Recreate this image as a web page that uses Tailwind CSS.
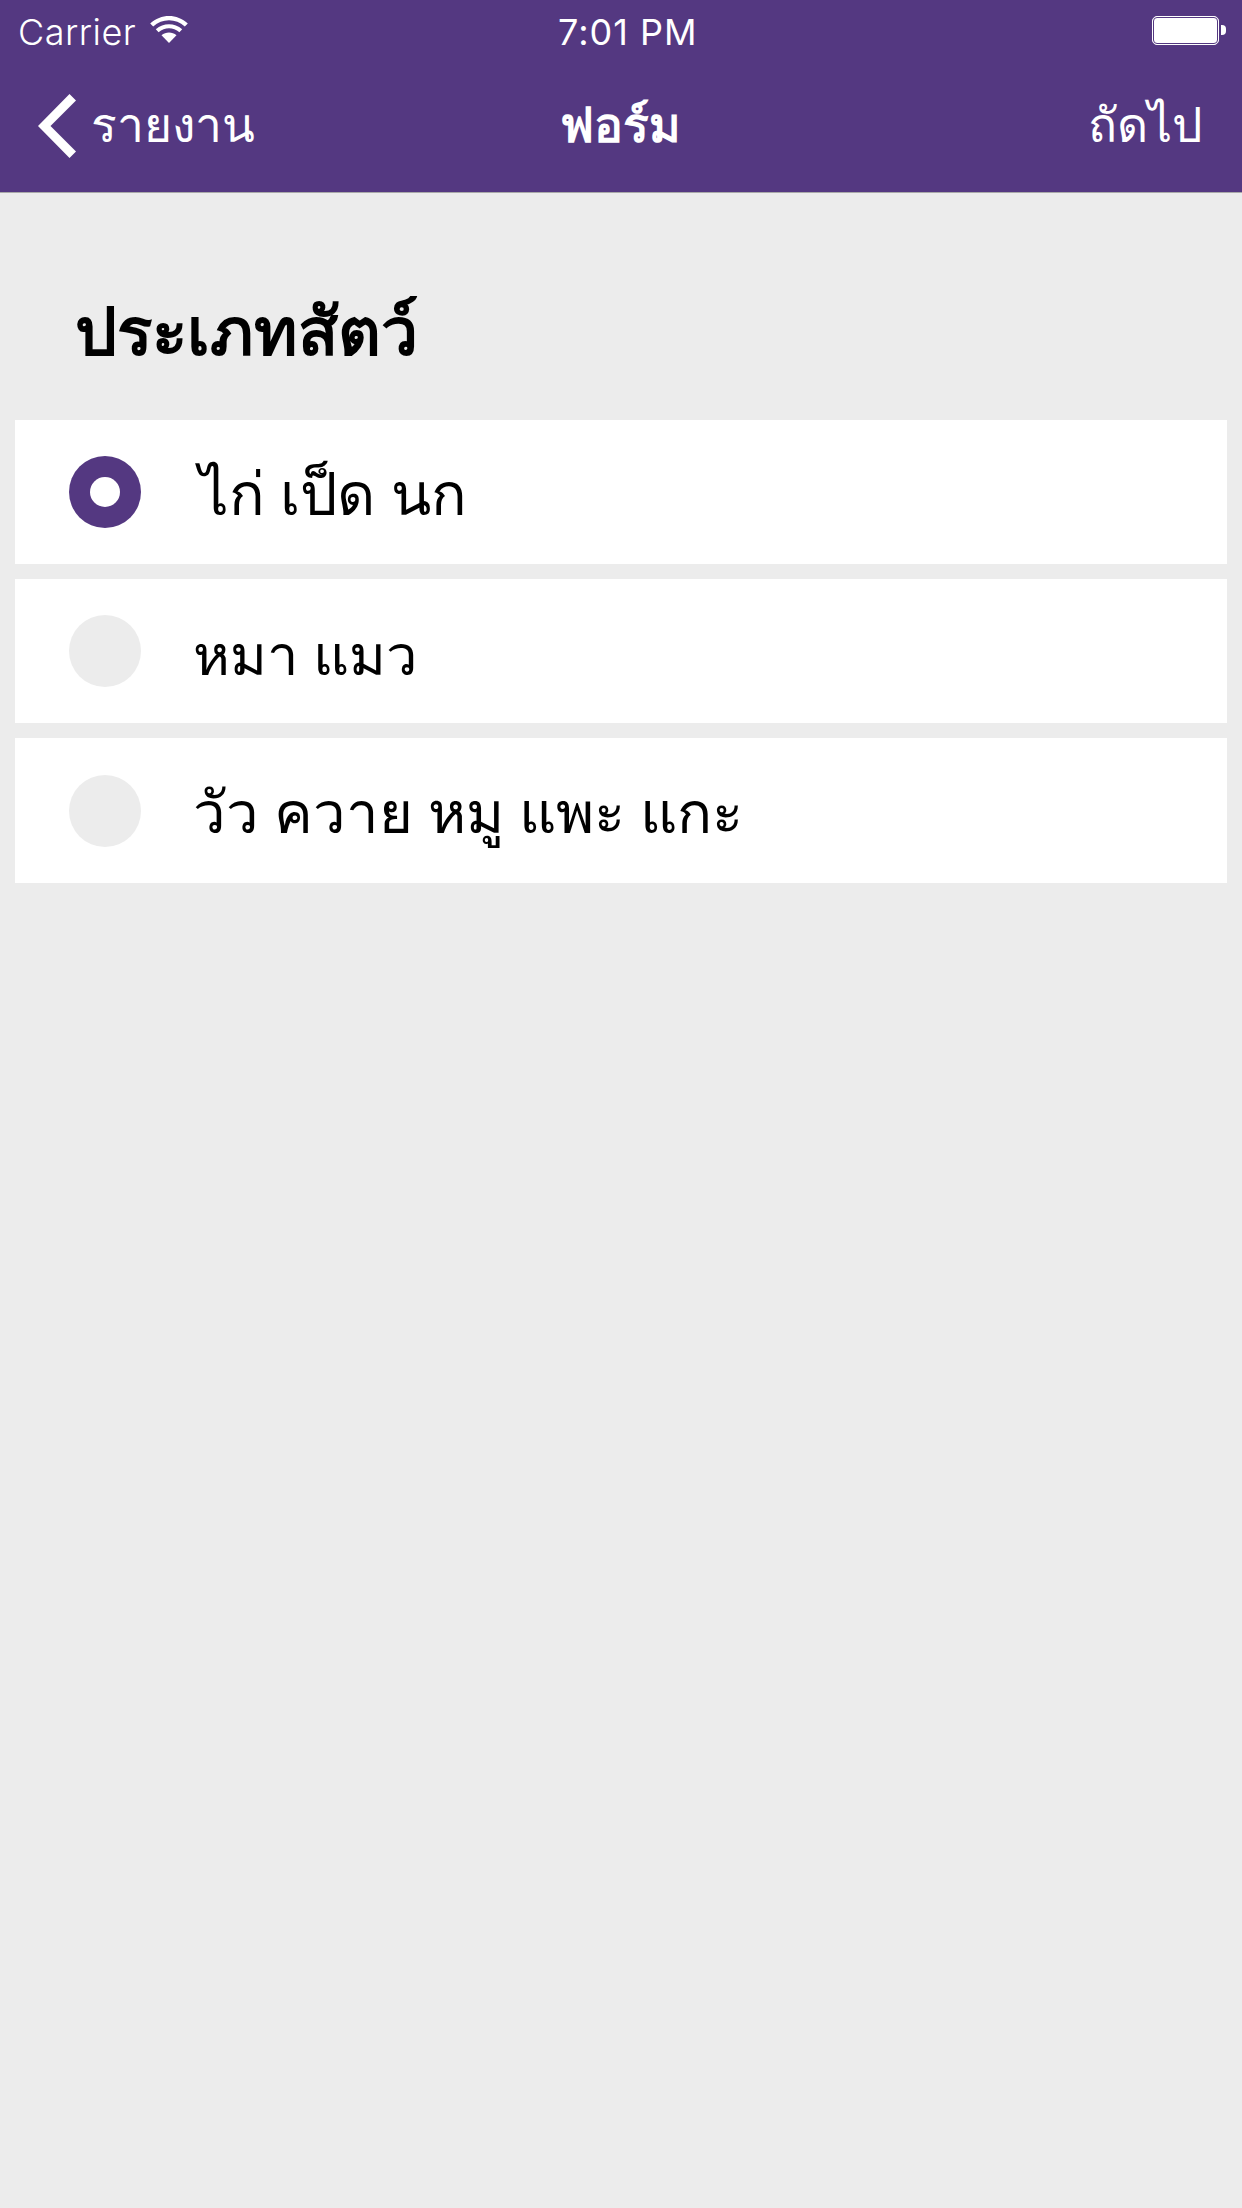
<!DOCTYPE html>
<html lang="th">
<head>
    <meta charset="UTF-8">
    <meta name="viewport" content="width=device-width, initial-scale=1.0">
    <title>ฟอร์ม</title>
    <script src="https://cdn.jsdelivr.net/npm/@tailwindcss/browser@4"></script>
</head>
<body class="w-[1242px] h-[2208px] overflow-hidden flex flex-col bg-[#ececec] font-['Noto_Sans','Liberation_Sans',sans-serif] text-black">
    <!-- nav -->
    <header class="h-[193px] shrink-0 bg-[#543881] border-b border-[#a9a9a9] text-white flex flex-col">
        <div class="h-[60px] pl-[18px] pr-[16px] pt-[3px] flex items-center justify-between relative font-['Inter',sans-serif] text-[36px]">
            <div class="flex items-center gap-[14px]">
                <span class="font-light tracking-[0.5px]">Carrier</span>
                <svg class="w-[38px] h-[28px] -mt-[6px]" viewBox="0 0 38 28" fill="white">
                    <path d="M19 28 L11.5 20.2 C15.8 16.6 22.2 16.6 26.5 20.2 Z"/>
                    <path d="M8.6 17.2 L5.8 14.3 C13.5 7.7 24.5 7.7 32.2 14.3 L29.4 17.2 C23.2 12 14.8 12 8.6 17.2 Z"/>
                    <path d="M3.2 11.5 L0.2 8.4 C10.8 -1.6 27.2 -1.6 37.8 8.4 L34.8 11.5 C25.8 3.2 12.2 3.2 3.2 11.5 Z"/>
                </svg>
            </div>
            <span class="absolute left-[558px] tracking-[1px]">7:01 PM</span>
            <div class="flex items-center gap-[2px] -mt-[3px]">
                <div class="w-[67px] h-[29px] rounded-[5px] border border-white bg-white outline outline-[#543881] -outline-offset-2"></div>
                <div class="w-[5px] h-[10px] bg-white rounded-r-[4px]"></div>
            </div>
        </div>
        <div class="flex-1 flex items-center justify-between relative pl-[38px] pr-[40px] text-[48px] pb-[4px]">
            <div class="flex items-center gap-[15px]">
                <svg class="w-[38px] h-[64px] translate-y-[2px]" viewBox="0 0 38 64" fill="white">
                    <path d="M31.5 0 L38 6.5 L12.5 32 L38 57.5 L31.5 64 L0 32 Z"/>
                </svg>
                <span>รายงาน</span>
            </div>
            <span class="absolute left-0 right-0 text-center font-bold -ml-[2px]">ฟอร์ม</span>
            <span>ถัดไป</span>
        </div>
    </header>

    <main class="flex-1 px-[15px]">
        <h1 class="pt-[92px] pl-[60px] h-[227px] text-[66px] leading-[88px] font-bold">ประเภทสัตว์</h1>
        <div class="flex flex-col gap-[15px]">
            <label class="h-[144px] bg-white flex items-center pl-[54px] text-[58px]">
                <span class="w-[72px] h-[72px] rounded-full bg-[#543881] flex items-center justify-center"><span class="w-[30px] h-[30px] rounded-full bg-white"></span></span>
                <span class="ml-[58px] mt-[1px] font-light text-[59px]">ไก่ เป็ด นก</span>
            </label>
            <label class="h-[144px] bg-white flex items-center pl-[54px] text-[58px]">
                <span class="w-[72px] h-[72px] rounded-full bg-[#ececec]"></span>
                <span class="ml-[52px] mt-[4px] font-light text-[56px]">หมา แมว</span>
            </label>
            <label class="h-[145px] bg-white flex items-center pl-[54px] text-[58px]">
                <span class="w-[72px] h-[72px] rounded-full bg-[#ececec]"></span>
                <span class="ml-[52px] font-light">วัว ควาย หมู แพะ แกะ</span>
            </label>
        </div>
    </main>
</body>
</html>
